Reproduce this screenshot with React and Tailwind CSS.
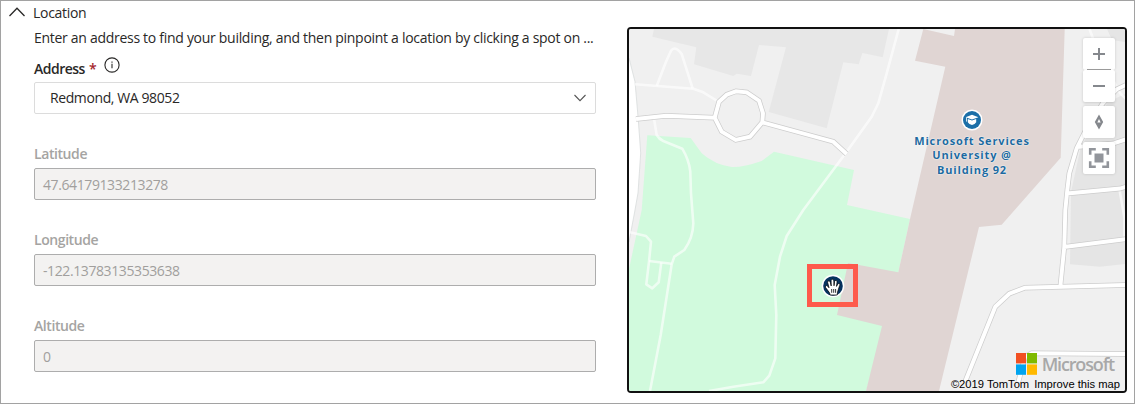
const GHOST_PATHS = [
  "M635 84.3L693.3 88.7L703.3 92.3L717.3 101",
  "M656.7 86L666 61.7L671 50.7Q675 45 681.7 54L685.7 66.7L692.7 88.7",
  "M654 118.7L656.7 135Q659 139 663.3 141L682.3 148.7Q689 160 690.3 171.7L691 193.3L693.3 223.3Q693 238 684.3 250L674.3 256.7L671.7 264.3L660.7 335L650 391",
  "M630 232.3L646 236L651 241.7L649 261.7L646.3 284.3L652.3 288.3L658.7 282.3L661.3 262.3",
  "M649 261L671.7 263.7",
  "M898.7 29L886.7 73.3L878.3 103.3L871.7 116.7L846.7 151.7L803.3 210L786.7 236L780 256.7L774.7 285L776.3 315L775.3 358.3L769.3 375.7L763.3 382.3L733.3 386.7L709 391",
  "M1089.5 29L1098 52L1120 93L1126 99",
  "M1119 187L1124.5 218V240",
];

const ROADS =
  "M636 119L666 115.7L714.7 117.7L719 101.7L726.7 94.7L736 91.3L746.7 92.3L759 100.7L763 113.3L762.3 122.3L750 136.7L735.7 140L721.7 131.7L714.7 117.7M762.3 122.3L833.3 141.7L846.7 154" +
  "M1127 84.5L1116.7 89.3L1103 103L1085 131.7L1076.7 148.3L1069.3 173.3L1067.3 190L1065.3 210L1064.3 246.7L1060.3 287" +
  "M1077 147L1113 143.5L1127 139M1067 193.5L1120 188.5L1127 186.5M1064 247L1127 239" +
  "M1127 285L1025 287.7L1009.3 293.7L995.3 306.7L965 382" +
  "M1127 354L1031.7 353.3L1025 357L1018.3 382";

function MapCanvas() {
  return (
    <svg viewBox="629 29 496 362" className="block h-full w-full" aria-hidden="true">
      <rect x="629" y="29" width="496" height="362" fill="#f0f0f0" />
      <path fill="#e7e7e7" d="M654 29L652.3 36.7L696.3 47.3L694 64.3L733.3 76L736.7 73.7L751 76L759 45L786 47.3L768.7 112L826.7 128.3L843.3 62.3L858.7 64.3L862.3 53L882.7 57.3L889 29Z" />
      <path fill="#e5e5e5" d="M1107 29L1112 40L1125 42V29ZM1125 94L1108 102L1090 132L1081 146L1071 192L1070 264.3L1100 266.7L1125 264Z" />
      <path fill="#d1fadd" d="M647.3 135.3L690.7 138L701.7 153.3Q715 165 731.7 167Q743 167.5 761.7 161L774 151.7L854 170L847 205L910 219L898 274L884 330L866 391H629V269L641.7 210Z" />
      <path fill="#e0d5d3" d="M923.3 29L954 36L955 29H1064.7L1060.7 157.7L1001.7 224.7L979 227L939 391H866L882 326L837 315L848 263L898.3 272.3L910 219L945.3 66.7L915 60.7Z" />
      <path fill="#fff" stroke="#d8dcdc" strokeWidth="0.8" d="M629 58L635 81.7L638.3 120L640.7 153L638 193L635 210L629 242L620 240V58Z" />
      <g fill="none" stroke="#fff" strokeOpacity="0.62" strokeWidth="2.6" strokeLinejoin="round">
        {GHOST_PATHS.map((d) => (
          <path key={d} d={d} />
        ))}
      </g>
      <path d={ROADS} fill="none" stroke="#cdcdcd" strokeWidth="5.4" />
      <path d={ROADS} fill="none" stroke="#fff" strokeWidth="3.9" />
    </svg>
  );
}

function MapPoi() {
  return (
    <div className="absolute left-[273px] top-[79.5px] flex w-[140px] flex-col items-center">
      <svg viewBox="0 0 22 22" className="h-[22px] w-[22px]">
        <circle cx="11" cy="11" r="10.5" fill="#fff" />
        <circle cx="11" cy="11" r="9" fill="#1b6fa8" />
        <path fill="#fff" d="M11 5.8L17.4 8.2L11 10.6L4.6 8.2ZM6.8 10L11 11.6L15.2 10V13.2Q14 15.4 11 15.9Q8 15.4 6.8 13.2Z" />
        <path stroke="#fff" strokeWidth="0.8" d="M5.5 8.5V12.6" />
      </svg>
      <p className="mt-[3.5px] whitespace-nowrap text-center font-['Open_Sans',sans-serif] text-[11px] font-bold leading-[14.4px] tracking-[0.86px] text-[#1d6a9f] [text-shadow:0_0_1px_#fff,0_0_2px_#fff]">
        Microsoft Services
        <br />
        University @
        <br />
        Building 92
      </p>
    </div>
  );
}

function MapPin() {
  return (
    <div className="absolute left-[178px] top-[235px] flex h-[43px] w-[51px] items-center justify-center border-[5px] border-[#fe5a4c]">
      <svg viewBox="0 0 24 24" className="h-6 w-6">
        <circle cx="12" cy="12" r="11.3" fill="#fff" />
        <circle cx="12" cy="12" r="9.8" fill="#06335f" />
        <path
          fill="#fff"
          stroke="#000"
          strokeWidth="0.7"
          strokeLinejoin="round"
          d="M9.2 21L8.4 18.6L4.6 13.6Q4 11.9 5.4 11.5Q6.4 11.5 8 13.8L6.6 8.3Q6.6 6.8 7.9 6.8Q8.9 6.9 9.3 8.4L10.2 12L10.1 6.6Q10.5 5.2 11.6 5.2Q12.6 5.4 12.8 6.8L13 11.8L13.6 7.4Q14.2 6.1 15.3 6.5Q16.2 6.9 16 8.3L15.5 12.4L16.7 10.2Q17.7 9.1 18.5 9.7Q19.2 10.3 18.7 11.4L17.3 15.6L16.5 18.2L16.2 21Z"
        />
        <path stroke="#000" strokeWidth="0.8" d="M10.7 15V18.8M12.7 15V18.8M14.6 15V18.8" />
      </svg>
    </div>
  );
}

function MapControls() {
  return (
    <div className="absolute right-[10px] top-[9px] flex w-8 flex-col">
      <button className="flex h-8 items-center justify-center rounded-[2px] bg-white shadow-[0_0_3px_rgba(0,0,0,0.16)]">
        <svg viewBox="0 0 32 32" className="h-8 w-8">
          <path d="M16 10V22M10 16H22" stroke="#85888d" strokeWidth="2" />
        </svg>
      </button>
      <button className="flex h-8 flex-col items-center rounded-[2px] bg-white shadow-[0_1px_3px_rgba(0,0,0,0.16)]">
        <svg viewBox="0 0 32 32" className="h-8 w-8 overflow-visible">
          <path d="M4 -0.5H28" stroke="#9a9a9a" strokeWidth="1" />
          <path d="M10 16H22" stroke="#85888d" strokeWidth="2" />
        </svg>
      </button>
      <button className="mt-1 h-8 rounded-[2px] bg-white shadow-[0_0_3px_rgba(0,0,0,0.16)]">
        <svg viewBox="0 0 32 32" className="h-8 w-8">
          <path fill="#85888d" fillRule="evenodd" d="M16 8.6L20.2 16L16 23.4L11.8 16ZM16 13L14.3 16.5H17.7Z" />
        </svg>
      </button>
      <button className="mt-1 h-8 rounded-[2px] bg-white shadow-[0_0_3px_rgba(0,0,0,0.16)]">
        <svg viewBox="0 0 32 32" className="h-8 w-8">
          <rect x="11.5" y="11.5" width="9" height="9" fill="#92959b" />
          <path d="M7.2 12.8V7.2H12.8M19.2 7.2H24.8V12.8M24.8 19.2V24.8H19.2M12.8 24.8H7.2V19.2" fill="none" stroke="#92959b" strokeWidth="2.6" />
        </svg>
      </button>
    </div>
  );
}

function MapFooter() {
  return (
    <div className="absolute bottom-[-1px] right-[5px] flex flex-col items-end">
      <div className="mr-[6px] flex h-[22px] items-center gap-[5px]">
        <svg viewBox="0 0 21 22" className="h-[22px] w-[21px]">
          <rect width="10" height="10.4" fill="#f25022" />
          <rect x="11" width="10" height="10.4" fill="#7fba00" />
          <rect y="11.4" width="10" height="10.4" fill="#00a4ef" />
          <rect x="11" y="11.4" width="10" height="10.4" fill="#ffb900" />
        </svg>
        <span className="font-['Open_Sans',sans-serif] text-[18px] font-semibold leading-[20px] tracking-[-1.15px] text-[#a8a8a8]">Microsoft</span>
      </div>
      <div className="flex h-[17px] items-center gap-[5px] whitespace-nowrap font-['Liberation_Sans',sans-serif] text-[11.2px] leading-[16px] text-black">
        <span>©2019 TomTom</span>
        <span>Improve this map</span>
      </div>
    </div>
  );
}

function DisabledField({ label, value }) {
  return (
    <label className="flex h-[86px] flex-col">
      <span className="h-6 font-semibold leading-5 tracking-[-0.42px] text-[#a5a4a2]">{label}</span>
      <span className="flex h-8 items-center rounded-[2px] border border-[#adadad] bg-[#f3f2f1] px-2 tracking-[-0.4px] text-[#a19f9d]">{value}</span>
    </label>
  );
}

export default function App() {
  return (
    <main className="flex h-[404px] w-[1135px] border border-[#a2a2a2] bg-white font-['Open_Sans','Noto_Sans',sans-serif] text-[14px] text-[#292827]">
      <section className="flex w-[595px] flex-col pl-[7px]">
        <header className="flex h-[22px] items-center gap-[7px]">
          <svg viewBox="0 0 18 12" className="h-3 w-[18px]">
            <path d="M1.5 10L9 2.3L16.5 10" fill="none" stroke="#292827" strokeWidth="1.3" />
          </svg>
          <h2 className="tracking-[-0.3px]">Location</h2>
        </header>
        <div className="flex flex-col pl-[26px]">
          <p className="h-[29px] whitespace-nowrap leading-[30px] tracking-[-0.29px]">
            Enter an address to find your building, and then pinpoint a location by clicking a spot on ...
          </p>
          <div className="flex h-[30px] items-center">
            <span className="mt-[2px] font-semibold tracking-[-0.5px]">Address</span>
            <span className="ml-[4px] mt-[2px] font-semibold text-[#a4262c]">*</span>
            <svg viewBox="0 0 16 16" className="mb-[5px] ml-[7px] h-4 w-4">
              <circle cx="8" cy="8" r="7.1" fill="none" stroke="#292827" strokeWidth="1.1" />
              <path d="M8 6.8V11.3M8 4.6V5.8" stroke="#292827" strokeWidth="1.1" />
            </svg>
          </div>
          <div className="flex h-8 items-center justify-between rounded-[2px] border border-[#dcdcdc] pl-[15px] pr-[9px]">
            <span className="pb-[2px] tracking-[-0.4px]">Redmond, WA 98052</span>
            <svg viewBox="0 0 12 8" className="h-2 w-3">
              <path d="M0.5 1L6 6.6L11.5 1" fill="none" stroke="#555" strokeWidth="1.1" />
            </svg>
          </div>
          <div className="flex flex-col pt-[30px]">
            <DisabledField label="Latitude" value="47.64179133213278" />
            <DisabledField label="Longitude" value="-122.13783135353638" />
            <DisabledField label="Altitude" value="0" />
          </div>
        </div>
      </section>
      <section className="ml-[31px] mt-[26px] h-[366px] w-[500px] shrink-0">
        <div className="relative h-full w-full overflow-hidden rounded-[4px] border-2 border-[#111]">
          <MapCanvas />
          <MapPoi />
          <MapPin />
          <MapControls />
          <MapFooter />
        </div>
      </section>
    </main>
  );
}
